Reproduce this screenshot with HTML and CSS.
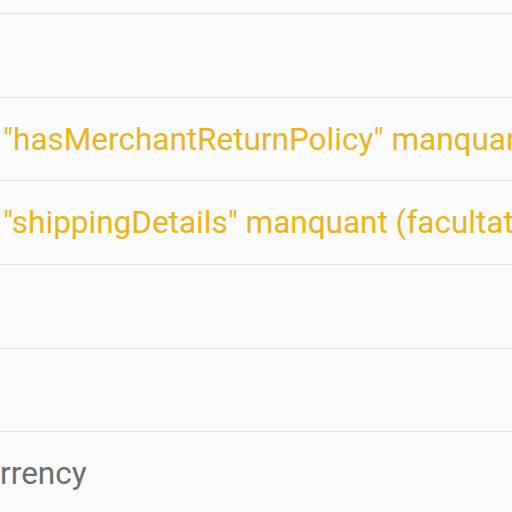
FILE: index.html
```html
<!DOCTYPE html>
<html lang="fr">
<head>
<meta charset="utf-8">
<link rel="stylesheet" href="styles.css">
</head>
<body>
<div class="table">
  <div class="row row-top"></div>
  <div class="row"></div>
  <div class="row"><span class="warn">"hasMerchantReturnPolicy" manquant (facultatif)</span></div>
  <div class="row"><span class="warn">"shippingDetails" manquant (facultatif)</span></div>
  <div class="row"></div>
  <div class="row"></div>
  <div class="row"><span class="prop">priceCurrency</span></div>
</div>
</body>
</html>
```
FILE: styles.css
```css
html, body {
  margin: 0;
  padding: 0;
  background: #fafafa;
  overflow: hidden;
}
.table {
  width: 512px;
  height: 512px;
  overflow: hidden;
  font-family: Roboto, "Liberation Sans", sans-serif;
  font-size: 31.5px;
  white-space: nowrap;
}
.row {
  height: 82.7px;
  border-bottom: 1px solid #e0e0e0;
  display: flex;
  align-items: center;
  padding-left: 3px;
}
.row-top {
  height: 13px;
}
.warn {
  color: #e9b51d;
}
.prop {
  color: #6d6d6d;
  margin-left: -110px;
}
```
